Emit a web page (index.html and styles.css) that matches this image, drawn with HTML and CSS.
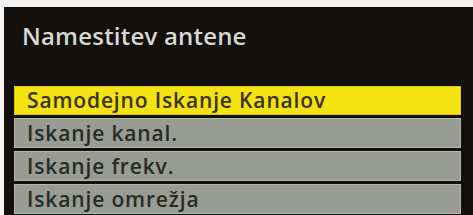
FILE: index.html
```html
<!DOCTYPE html>
<html>
<head>
<meta charset="utf-8">
<link rel="stylesheet" href="styles.css">
</head>
<body>
<div class="panel">
  <div class="title">Namestitev antene</div>
  <div class="menu">
    <div class="item active">Samodejno Iskanje Kanalov</div>
    <div class="item">Iskanje kanal.</div>
    <div class="item">Iskanje frekv.</div>
    <div class="item">Iskanje omrežja</div>
  </div>
</div>
</body>
</html>
```
FILE: styles.css
```css
html, body {
  margin: 0;
  padding: 0;
  width: 473px;
  height: 215px;
  overflow: hidden;
  background: #f2f2f2;
}
.panel {
  margin: 7px 0 0 4px;
  height: 208px;
  background: #120f0d;
  padding: 0 12px 0 10px;
  display: flex;
  flex-direction: column;
  font-family: "Open Sans", "DejaVu Sans", sans-serif;
}
.title {
  height: 79px;
  padding-left: 8px;
  padding-top: 14px;
  box-sizing: border-box;
  color: #d6d6d3;
  font-size: 24px;
  font-weight: 600;
  line-height: 30px;
  letter-spacing: 0.2px;
}
.menu {
  display: flex;
  flex-direction: column;
  gap: 3px;
}
.item {
  height: 30px;
  box-sizing: border-box;
  padding-left: 12px;
  background: #989c92;
  color: #2a2b27;
  font-size: 21px;
  font-weight: 600;
  line-height: 28px;
  letter-spacing: 0.85px;
  border: 1px solid #b3b6ad;
}
.item.active {
  background: #f4e213;
  color: #3a3418;
  border-color: #d8c60a;
  height: 29px;
  line-height: 26px;
}
```
